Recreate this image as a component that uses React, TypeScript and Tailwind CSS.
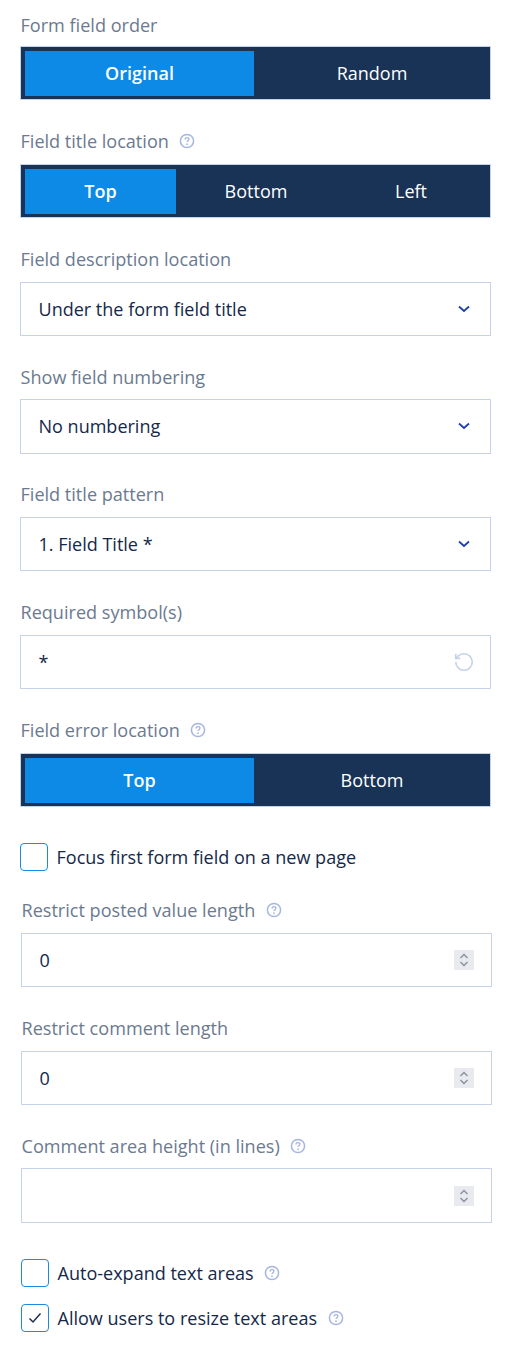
import React from "react";

function Help() {
  return (
    <svg width="16" height="16" viewBox="0 0 16 16" fill="none" className="ml-[10.5px] shrink-0">
      <circle cx="8" cy="8" r="6.6" stroke="#a6b6e2" strokeWidth="1.5" />
      <path d="M6.1 6.4c0-1.1.9-1.8 1.9-1.8s1.9.7 1.9 1.7c0 1.4-1.9 1.5-1.9 2.8" stroke="#a6b6e2" strokeWidth="1.4" fill="none" />
      <circle cx="8" cy="11.2" r=".85" fill="#a6b6e2" />
    </svg>
  );
}

function Label({ text, help }: { text: string; help?: boolean }) {
  return (
    <div className="mt-[28.7px] flex h-[24px] items-center pl-[0.5px] text-[18.08px] leading-[24px] text-[#6b7a90] first:mt-0">
      <span>{text}</span>
      {help && <Help />}
    </div>
  );
}

function Segmented({ options, widths }: { options: string[]; widths: string[] }) {
  return (
    <div className="mt-[10.7px] flex h-[54.4px] border border-[#c5d3e8] bg-[#193356] pb-[3px] pl-[4px] pr-0 pt-[4px]">
      <div className={widths[0] + " flex items-center justify-center bg-[#0c8ae6] text-[18px] font-semibold text-white"}>{options[0]}</div>
      {options.slice(1).map((o, i) => (
        <div key={o} className={widths[i + 1] + " flex items-center justify-center text-[18px] text-white"}>
          {o}
        </div>
      ))}
    </div>
  );
}

function Chevron() {
  return (
    <svg width="12" height="8" viewBox="0 0 12 8" fill="none" className="mr-[20px]">
      <path d="M1 1.5 6 6l5-4.5" stroke="#1a3fa8" strokeWidth="1.7" />
    </svg>
  );
}

function Box({ value, children }: { value: string; children?: React.ReactNode }) {
  return (
    <div className="mt-[10.7px] flex h-[54.4px] items-center justify-between border border-[#c5d3e8] bg-white pl-[17.5px] text-[18.02px] text-[#14284a]">
      <span className="pt-[1px]">{value}</span>
      {children}
    </div>
  );
}

function Spinner() {
  return (
    <div className="mr-[17px] flex h-[20px] w-[20px] items-center justify-center bg-[#e9eaef]">
      <svg width="10" height="16" viewBox="0 0 10 16" fill="none">
        <path d="M1.5 6 5 2.5 8.5 6M1.5 10 5 13.5 8.5 10" stroke="#8a8f9c" strokeWidth="1.4" />
      </svg>
    </div>
  );
}

function Check({ checked, text, help, className }: { checked?: boolean; text: string; help?: boolean; className: string }) {
  return (
    <div className={className + " flex h-[28px] items-center text-[18.05px] text-[#14284a]"}>
      <div className="mr-[8.5px] flex h-[28px] w-[28px] items-center justify-center rounded-[4px] border border-[#1c8ae0] bg-white">
        {checked && (
          <svg width="14" height="12" viewBox="0 0 14 12" fill="none">
            <path d="M1.5 6.5 5 10l7.5-8.5" stroke="#1d2f4d" strokeWidth="1.5" />
          </svg>
        )}
      </div>
      <span className="pt-[1px]">{text}</span>
      {help && <Help />}
    </div>
  );
}

export default function App() {
  return (
    <div className="h-[1346px] w-[512px] overflow-hidden bg-white pl-[20px] pr-[21px] pt-[13.3px] font-['Open_Sans',sans-serif]">
      <Label text="Form field order" />
      <div className="mt-[-2px]">
        <Segmented options={["Original", "Random"]} widths={["w-[229px]", "flex-1"]} />
      </div>

      <Label text="Field title location" help />
      <Segmented options={["Top", "Bottom", "Left"]} widths={["w-[151px]", "w-[160px]", "flex-1 pr-[4px]"]} />

      <Label text="Field description location" />
      <Box value="Under the form field title"><Chevron /></Box>

      <Label text="Show field numbering" />
      <Box value="No numbering"><Chevron /></Box>

      <Label text="Field title pattern" />
      <Box value="1. Field Title *"><Chevron /></Box>

      <Label text="Required symbol(s)" />
      <Box value="*">
        <svg width="22" height="22" viewBox="0 0 24 24" fill="none" stroke="#c5d3e8" strokeWidth="1.8" className="mr-[15px]">
          <path d="M3 12a9 9 0 1 0 9-9 9.75 9.75 0 0 0-6.74 2.74L3 8" />
          <path d="M3 3v5h5" />
        </svg>
      </Box>

      <Label text="Field error location" help />
      <Segmented options={["Top", "Bottom"]} widths={["w-[229px]", "flex-1"]} />

      <Check className="mt-[36px]" text="Focus first form field on a new page" />

      <div className="ml-[1px] mr-[-1px]">
        <div className="mt-[27.3px]">
          <Label text="Restrict posted value length" help />
        </div>
        <Box value="0"><Spinner /></Box>

        <Label text="Restrict comment length" />
        <Box value="0"><Spinner /></Box>

        <Label text="Comment area height (in lines)" help />
        <Box value=""><Spinner /></Box>

        <Check className="mt-[36px]" text="Auto-expand text areas" help />
        <Check className="mt-[17px]" checked text="Allow users to resize text areas" help />
      </div>
    </div>
  );
}
